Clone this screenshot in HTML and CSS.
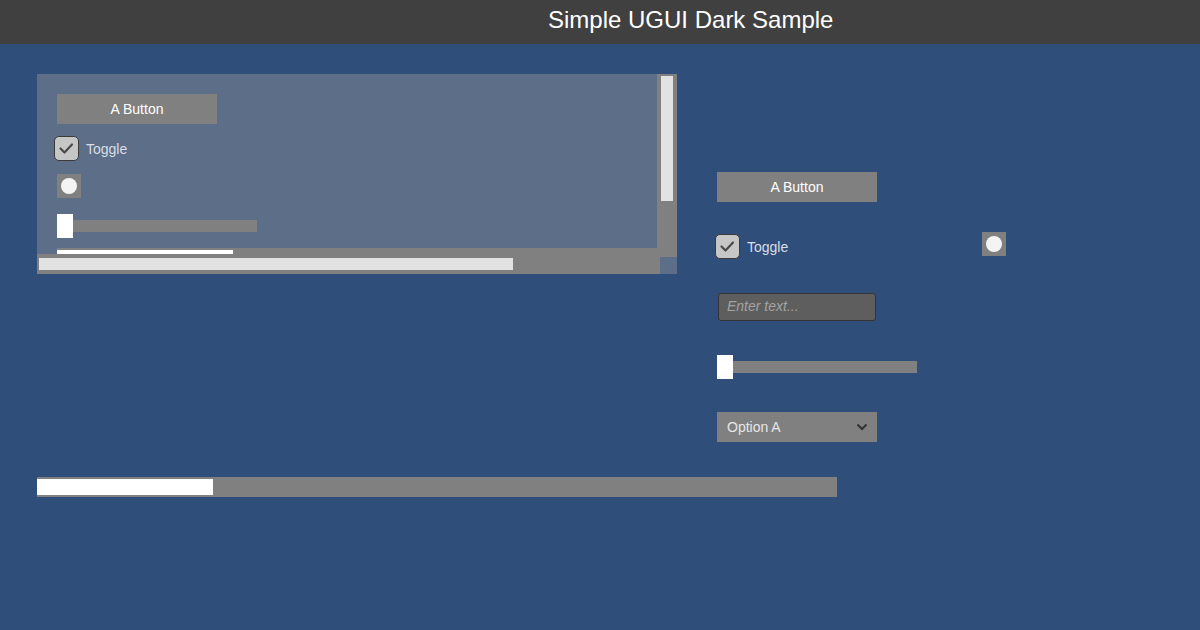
FILE: index.html
```html
<!DOCTYPE html>
<html lang="en">
<head>
<meta charset="utf-8">
<title>Simple UGUI Dark Sample</title>
<link rel="stylesheet" href="styles.css">
</head>
<body>
<header class="header"><h1 class="title">Simple UGUI Dark Sample</h1></header>
<main class="main">
  <div class="top-row">
    <div class="scroll-view">
      <div class="viewport">
        <div class="content">
          <button class="btn">A Button</button>
          <label class="toggle toggle-in">
            <span class="check"><svg viewBox="0 0 25 25" width="25" height="25"><path d="M6.5 12.5 L10.5 16.5 L18 8.5" fill="none" stroke="#4a4a4a" stroke-width="2.2" stroke-linecap="round" stroke-linejoin="round"/></svg></span>
            <span class="toggle-label">Toggle</span>
          </label>
          <div class="radio radio-in"><span class="dot"></span></div>
          <div class="slider slider-in"><span class="track"></span><span class="handle"></span></div>
          <div class="bar bar-wide bar-in"><span class="fill" style="width:176px"></span></div>
        </div>
      </div>
      <div class="vbar"><span class="vhandle"></span></div>
      <div class="hbar"><span class="hhandle"></span></div>
    </div>
    <div class="side">
      <button class="btn">A Button</button>
      <div class="toggle-row">
        <label class="toggle toggle-side">
          <span class="check"><svg viewBox="0 0 25 25" width="25" height="25"><path d="M6.5 12.5 L10.5 16.5 L18 8.5" fill="none" stroke="#4a4a4a" stroke-width="2.2" stroke-linecap="round" stroke-linejoin="round"/></svg></span>
          <span class="toggle-label">Toggle</span>
        </label>
        <div class="radio"><span class="dot"></span></div>
      </div>
      <div class="input"><span class="placeholder">Enter text...</span></div>
      <div class="slider slider-side"><span class="track"></span><span class="handle"></span></div>
      <div class="dropdown">
        <span class="dd-label">Option A</span>
        <svg class="chev" viewBox="0 0 12 8" width="12" height="8"><path d="M1.5 1.5 L6 6 L10.5 1.5" fill="none" stroke="#333" stroke-width="2"/></svg>
      </div>
    </div>
  </div>
  <div class="bar bar-bottom"><span class="fill" style="width:176px"></span></div>
</main>
</body>
</html>
```

FILE: styles.css
```css
* { box-sizing: border-box; }
html, body { margin: 0; padding: 0; }
body {
  width: 1200px;
  height: 630px;
  overflow: hidden;
  background: #2f4e79;
  font-family: "Liberation Sans", Arial, sans-serif;
}
.header {
  height: 44px;
  background: #404040;
  padding-left: 548px;
}
.title {
  margin: 0;
  font-size: 24px;
  font-weight: normal;
  line-height: 40px;
  color: #ffffff;
}
.main {
  display: flex;
  flex-direction: column;
  align-items: flex-start;
  padding: 30px 0 0 37px;
}
.top-row {
  display: flex;
  align-items: flex-start;
  gap: 40px;
}
.scroll-view {
  width: 640px;
  height: 200px;
  background: #5c6e88;
  display: grid;
  grid-template-columns: 620px 20px;
  grid-template-rows: 180px 20px;
}
.viewport {
  grid-column: 1;
  grid-row: 1;
  overflow: hidden;
  padding: 20px;
}
.content {
  display: flex;
  flex-direction: column;
  align-items: flex-start;
}
.vbar {
  grid-column: 2;
  grid-row: 1;
  margin-bottom: -3px;
  background: #808080;
  padding: 2px 4px;
}
.vhandle {
  display: block;
  width: 12px;
  height: 125px;
  background: #e2e2e2;
}
.hbar {
  grid-column: 1;
  grid-row: 2;
  margin-right: -3px;
  background: #808080;
  padding: 4px 2px;
  position: relative;
  z-index: 1;
}
.hhandle {
  display: block;
  width: 474px;
  height: 12px;
  background: #e2e2e2;
}
.btn {
  width: 160px;
  height: 30px;
  border: 0;
  margin: 0;
  padding: 0;
  background: #808080;
  color: #ffffff;
  font-family: "Liberation Sans", Arial, sans-serif;
  font-size: 14px;
  text-align: center;
}
.toggle {
  display: flex;
  align-items: center;
  gap: 7px;
}
.check {
  width: 25px;
  height: 25px;
  border: 1px solid #3a3a3a;
  border-radius: 5px;
  background: #c6c6c6;
  display: flex;
  align-items: center;
  justify-content: center;
  overflow: hidden;
}
.check svg { display: block; flex: none; }
.toggle-label {
  font-size: 14px;
  color: #d9dee7;
}
.toggle-in { margin: 12px 0 0 -3px; }
.radio {
  width: 24px;
  height: 24px;
  background: #808080;
  display: flex;
  align-items: center;
  justify-content: center;
}
.dot {
  width: 16px;
  height: 16px;
  border-radius: 50%;
  background: #f4f4f4;
}
.radio-in { margin-top: 13px; }
.slider {
  position: relative;
  width: 200px;
  height: 24px;
  display: flex;
  align-items: center;
}
.track {
  width: 200px;
  height: 12px;
  background: #808080;
}
.handle {
  position: absolute;
  left: 0;
  top: 0;
  width: 16px;
  height: 24px;
  background: #ffffff;
}
.slider-in { margin-top: 16px; }
.bar {
  width: 800px;
  height: 20px;
  background: #808080;
  padding: 2px 0;
  flex: none;
}
.fill {
  display: block;
  height: 16px;
  background: #ffffff;
}
.bar-in { margin-top: 10px; }
.bar-bottom { margin-top: 35px; }
.side {
  width: 289px;
  padding-top: 98px;
  display: flex;
  flex-direction: column;
  align-items: flex-start;
}
.toggle-row {
  width: 291px;
  margin: 30px 0 0 -2px;
  display: flex;
  justify-content: space-between;
  align-items: flex-start;
}
.toggle-side { margin-top: 2px; }
.input {
  width: 158px;
  height: 28px;
  margin: 34px 0 0 1px;
  background: #5e5e5e;
  border: 1px solid #343434;
  border-radius: 3px;
  padding: 0 8px 3px 8px;
  display: flex;
  align-items: center;
}
.placeholder {
  font-size: 14px;
  font-style: italic;
  color: #a2a2a2;
}
.slider-side { margin-top: 34px; }
.dropdown {
  width: 160px;
  height: 30px;
  margin-top: 33px;
  background: #808080;
  padding: 0 9px 0 10px;
  display: flex;
  align-items: center;
  justify-content: space-between;
}
.dd-label {
  font-size: 14px;
  color: #e6e6e6;
}
.chev { display: block; }
```
